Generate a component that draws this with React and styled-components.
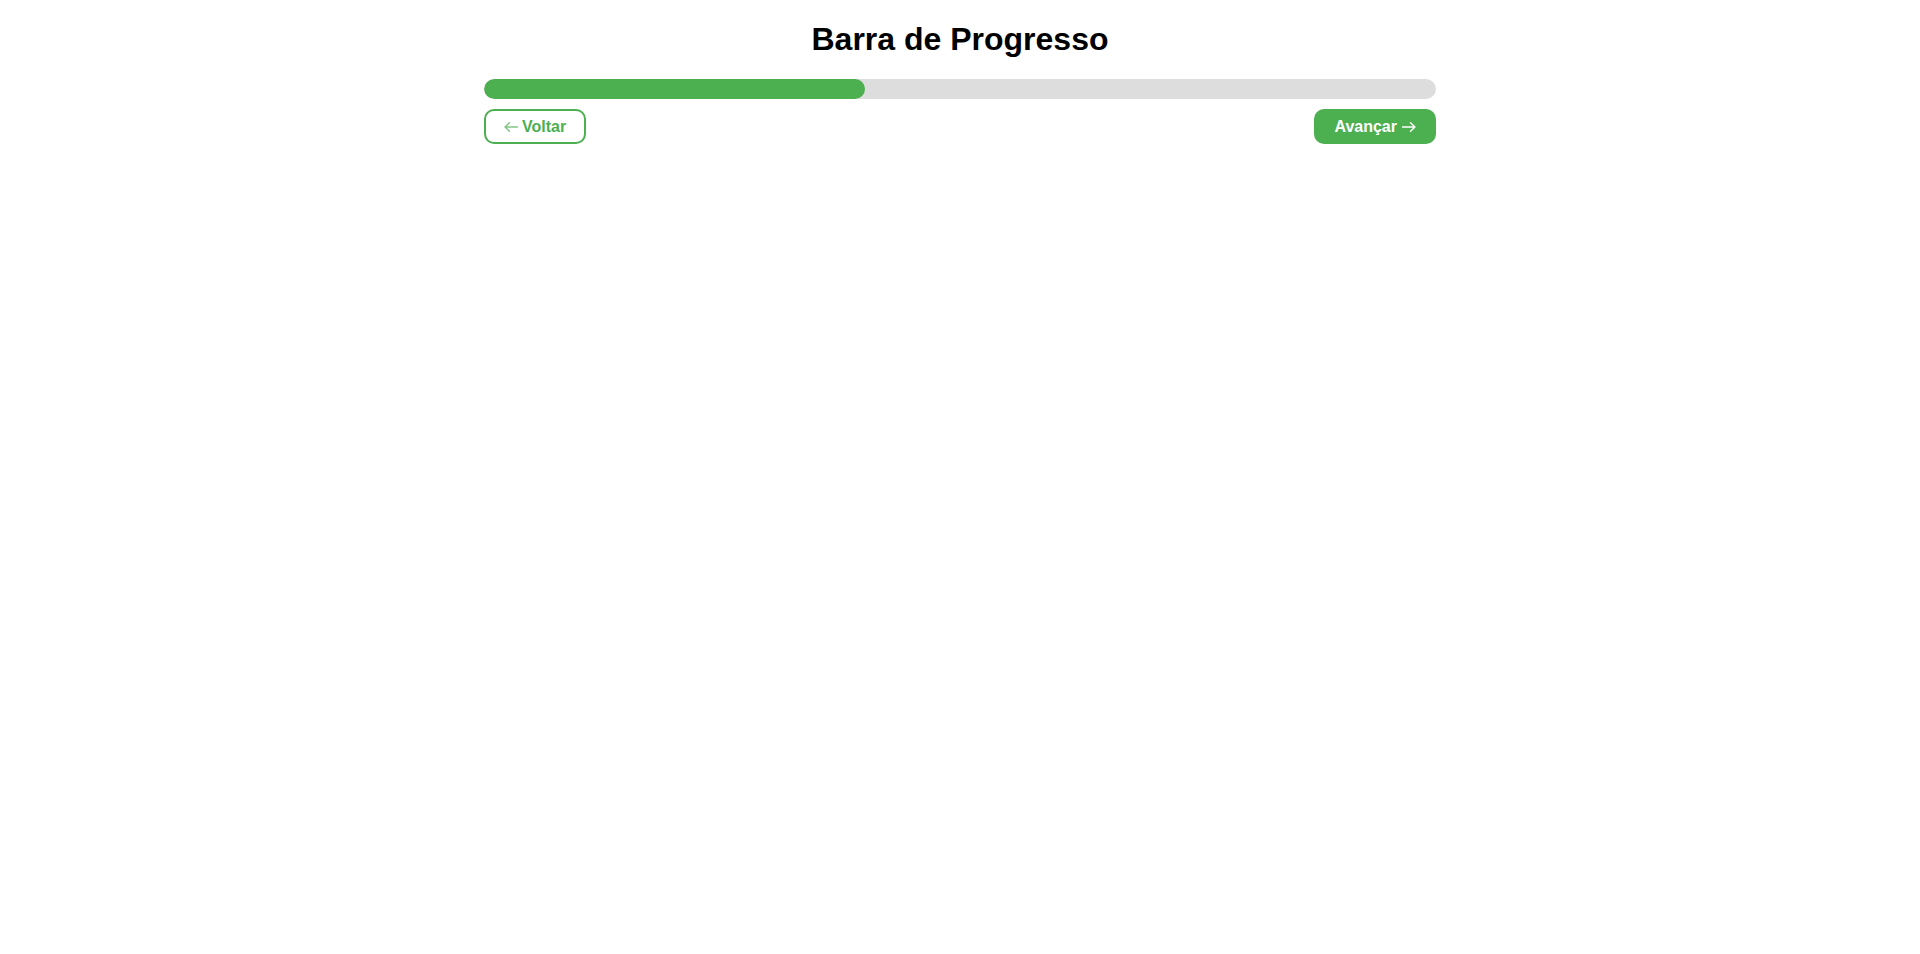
import React, { useState } from "react";
import styled, { createGlobalStyle } from "styled-components";

const Global = createGlobalStyle`
  body {
    margin: 8px;
    background: #fff;
    font-family: "Liberation Sans", Arial, sans-serif;
  }
`;

const Container = styled.div`
  width: 50%;
  margin: 0 auto;
`;

const Title = styled.h1`
  font-size: 32px;
  font-weight: bold;
  text-align: center;
  margin: 13px 0 21.44px;
  color: #000;
`;

const Track = styled.div`
  width: 100%;
  height: 20px;
  background: #ddd;
  border-radius: 10px;
  overflow: hidden;
`;

const Fill = styled.div`
  height: 100%;
  background: #4caf50;
  border-radius: 10px;
`;

const Controls = styled.div`
  display: flex;
  justify-content: space-between;
  margin-top: 10px;
`;

const Button = styled.button`
  display: inline-flex;
  align-items: center;
  gap: ${(p) => (p.$primary ? "5px" : "4px")};
  font-family: "Liberation Sans", Arial, sans-serif;
  font-size: 16px;
  line-height: 19px;
  font-weight: bold;
  padding: 6px 18px;
  border: 2px solid #4caf50;
  border-radius: 10px;
  cursor: pointer;
  background: ${(p) => (p.$primary ? "#4caf50" : "#fff")};
  color: ${(p) => (p.$primary ? "#fff" : "#4caf50")};
`;

const ArrowSvg = styled.svg`
  width: 14px;
  height: 10px;
  flex: none;
  margin-top: 1px;
  opacity: ${(p) => (p.$soft ? 0.7 : 1)};
`;

function Arrow({ dir, soft }) {
  const d =
    dir === "left"
      ? "M13.5 5H1 M5.5 0.8L1 5L5.5 9.2"
      : "M0.5 5H13 M8.5 0.8L13 5L8.5 9.2";
  return (
    <ArrowSvg $soft={soft} viewBox="0 0 14 10" fill="none" stroke="currentColor" strokeWidth="1.4" strokeLinecap="round" strokeLinejoin="round">
      <path d={d} />
    </ArrowSvg>
  );
}

export default function App() {
  const [progress, setProgress] = useState(40);
  return (
    <>
      <Global />
      <Container>
        <Title>Barra de Progresso</Title>
        <Track>
          <Fill style={{ width: `${progress}%` }} />
        </Track>
        <Controls>
          <Button onClick={() => setProgress((p) => Math.max(0, p - 10))}>
            <Arrow dir="left" soft />
            Voltar
          </Button>
          <Button $primary onClick={() => setProgress((p) => Math.min(100, p + 10))}>
            Avançar
            <Arrow dir="right" />
          </Button>
        </Controls>
      </Container>
    </>
  );
}
